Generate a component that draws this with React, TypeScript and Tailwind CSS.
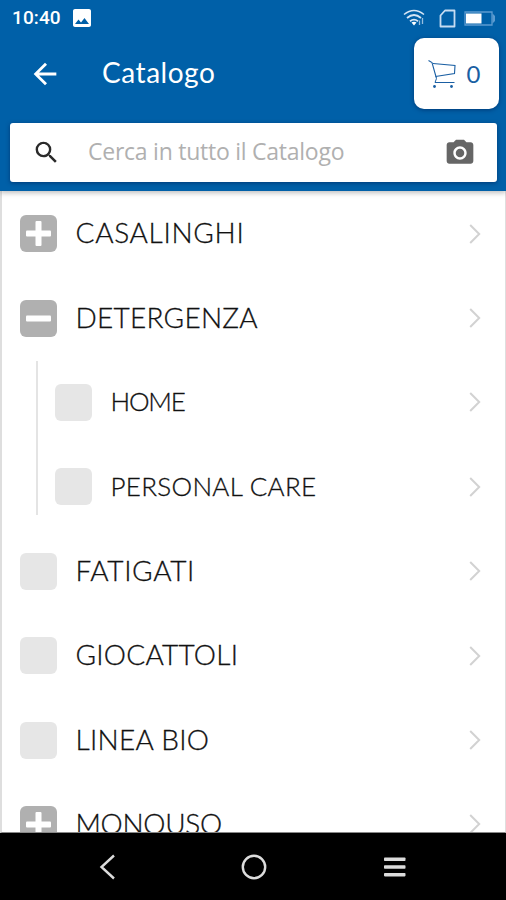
import clsx from "clsx";
import { MdArrowBack, MdCameraAlt, MdImage, MdSearch } from "react-icons/md";

type Category = {
  name: string;
  tracking: string;
  state?: "open" | "closed";
  children?: Category[];
};

const CATEGORIES: Category[] = [
  { name: "CASALINGHI", tracking: "tracking-[0.7px]", state: "closed" },
  {
    name: "DETERGENZA",
    tracking: "tracking-[0.25px]",
    state: "open",
    children: [
      { name: "HOME", tracking: "tracking-[-1.2px]" },
      { name: "PERSONAL CARE", tracking: "tracking-[0.3px]" },
    ],
  },
  { name: "FATIGATI", tracking: "tracking-[0.6px]" },
  { name: "GIOCATTOLI", tracking: "tracking-[0.25px]" },
  { name: "LINEA BIO", tracking: "tracking-[0.3px]" },
  { name: "MONOUSO", tracking: "tracking-[-0.3px]", state: "closed" },
];

function StatusBar() {
  return (
    <div className="flex h-9 items-center pl-3 pr-[10px]">
      <span className="font-[Roboto,sans-serif] text-[19px] font-medium leading-9 tracking-[0.1px]">10:40</span>
      <MdImage className="ml-[9px] h-[24px] w-[24px]" aria-hidden />
      <svg className="ml-auto h-[18px] w-[22px]" viewBox="0 0 22 18" fill="none" stroke="#d5e5f5" aria-hidden>
        <path d="M1 5.500Q11-2.500 21 5.500" strokeWidth="1.500" />
        <path d="M4 9Q11 3 18 9" strokeWidth="1.800" />
        <path d="M7 12.200Q11 9 15 12.200" strokeWidth="1.800" />
        <path d="M8.500 13.500Q11 12 13.500 13.500L11 16.500Z" fill="#fff" stroke="none" />
        <path d="M16.500 16V11.500M19.500 15V9" strokeWidth="1.300" opacity="0.7" />
      </svg>
      <svg className="ml-[14px] h-[19px] w-[17px]" viewBox="0 0 17 19" fill="none" stroke="#c5dcf2" strokeWidth="1.800" aria-hidden>
        <path d="M6 1.500H15.500V17.500H1.500V6.500Z" strokeLinejoin="round" />
      </svg>
      <svg className="ml-[8px] h-[15px] w-[32px]" viewBox="0 0 32 15" aria-hidden>
        <path d="M1 1H28V14H1Z" fill="none" stroke="#5c9bd0" strokeWidth="1.300" />
        <path d="M28.500 2.500L31 5V10L28.500 12.500Z" fill="#5c9bd0" />
        <path d="M2 2.500H17.500V12.500H2Z" fill="#fff" />
      </svg>
    </div>
  );
}

function CartButton() {
  return (
    <button
      type="button"
      className="flex h-[71px] w-[85px] items-center rounded-[10px] bg-white pl-[14px] text-[#1a5fa3] shadow-[0_1px_4px_rgba(0,20,70,0.5)]"
    >
      <svg className="h-[30px] w-[30px]" viewBox="0 0 30 30" fill="none" stroke="currentColor" strokeWidth="1.100" aria-hidden>
        <path d="M0.500 1.500L4 3.500L8.500 19.500" />
        <path d="M5 4.500L27 6.500L26.500 14.500L7.500 17.500" />
        <path d="M8.500 19.500L7 23.500H26.500" strokeWidth="1" />
        <circle cx="6.500" cy="27.500" r="1.400" fill="currentColor" stroke="none" />
        <circle cx="23.500" cy="27.500" r="1.400" fill="currentColor" stroke="none" />
      </svg>
      <span className="ml-[9px] font-[Lato,sans-serif] text-[24px] leading-8">0</span>
    </button>
  );
}

function Toggle({ state }: { state?: "open" | "closed" }) {
  return (
    <span
      className={clsx(
        "flex h-[37px] w-[37px] shrink-0 items-center justify-center rounded-[6px]",
        state ? "bg-[#b0b0b0]" : "bg-[#e6e6e6]",
      )}
    >
      {state && (
        <svg className="h-[27px] w-[27px]" viewBox="0 0 27 27" fill="#fff" aria-hidden>
          <rect x="1" y="10.500" width="25" height="6" rx="1" />
          {state === "closed" && <rect x="10.500" y="1" width="6" height="25" rx="1" />}
        </svg>
      )}
    </span>
  );
}

function Row({ category, nested = false }: { category: Category; nested?: boolean }) {
  return (
    <div className={clsx("flex h-[84.4px] shrink-0 items-center pr-[24px]", nested ? "pl-[17px]" : "pl-[18px]")}>
      <Toggle state={category.state} />
      <span
        className={clsx(
          "ml-[18.5px] whitespace-nowrap font-light text-[#111] [-webkit-text-stroke:0.3px_#111]",
          nested ? "pb-[2px] text-[26px] leading-8" : "pb-[3px] text-[28px] leading-9",
          category.tracking,
        )}
      >
        {category.name}
      </span>
      <svg className="ml-auto h-5 w-3 shrink-0" viewBox="0 0 12 20" fill="none" stroke="#d2d2d2" strokeWidth="2" aria-hidden>
        <path d="M1.200 1L10.200 10L1.200 19" />
      </svg>
    </div>
  );
}

function NavBar() {
  return (
    <nav className="flex h-[67px] shrink-0 items-center bg-black text-[#dcdcdc]">
      <svg className="ml-[99px] h-[26px] w-[17px]" viewBox="0 0 17 26" fill="none" stroke="currentColor" strokeWidth="2.400" aria-hidden>
        <path d="M15 1.500L2.500 13L15 24.500" />
      </svg>
      <svg className="ml-[125px] h-[26px] w-[26px]" viewBox="0 0 26 26" fill="none" stroke="currentColor" strokeWidth="2.400" aria-hidden>
        <circle cx="13" cy="13" r="11.200" />
      </svg>
      <svg className="ml-[116.5px] h-[20px] w-[22px]" viewBox="0 0 22 20" fill="currentColor" aria-hidden>
        <rect y="0.500" width="21.500" height="3.500" rx="0.800" />
        <rect y="8.200" width="21.500" height="3.500" rx="0.800" />
        <rect y="15.900" width="21.500" height="3.500" rx="0.800" />
      </svg>
    </nav>
  );
}

export default function App() {
  return (
    <div className="flex h-[900px] w-[506px] flex-col overflow-hidden bg-white font-[Lato,sans-serif]">
      <header className="z-10 h-[191px] shrink-0 bg-[#0060a8] text-white shadow-[0_2px_5px_rgba(0,0,0,0.25)]">
        <StatusBar />
        <div className="flex h-[75px] items-center pl-[28px] pr-[7.5px]">
          <MdArrowBack className="h-[34px] w-[34px]" aria-hidden />
          <h1 className="ml-[40px] pb-[3px] text-[28px] leading-9 tracking-[0.55px]">Catalogo</h1>
          <div className="ml-auto">
            <CartButton />
          </div>
        </div>
        <label className="ml-[10px] mt-[12px] flex h-[59px] w-[487px] items-center rounded-[3px] bg-white pl-[22px] pr-[21px] shadow-[0_1px_4px_rgba(0,20,70,0.5)]">
          <MdSearch className="h-[29px] w-[29px] text-[#2a2a2a]" aria-hidden />
          <input
            type="text"
            placeholder="Cerca in tutto il Catalogo"
            className="ml-[27px] w-[300px] pb-[3px] font-['Open_Sans',sans-serif] text-[23px] leading-8 tracking-[-0.25px] outline-none placeholder:text-[#b0b0b0]"
          />
          <MdCameraAlt className="ml-auto h-8 w-8 text-[#666]" aria-hidden />
        </label>
      </header>

      <main className="flex min-h-0 flex-1 flex-col overflow-hidden border-b border-l-2 border-r border-[#dedede] border-b-[#888] pt-[0.5px]">
        {CATEGORIES.map((category) => (
          <div key={category.name} className="shrink-0">
            <Row category={category} />
            {category.children && (
              <div className="relative pl-[36px]">
                <span className="absolute left-[34px] top-[0.5px] h-[154px] w-[2px] bg-[#e4e4e4]" />
                {category.children.map((child) => (
                  <Row key={child.name} category={child} nested />
                ))}
              </div>
            )}
          </div>
        ))}
      </main>

      <NavBar />
    </div>
  );
}
